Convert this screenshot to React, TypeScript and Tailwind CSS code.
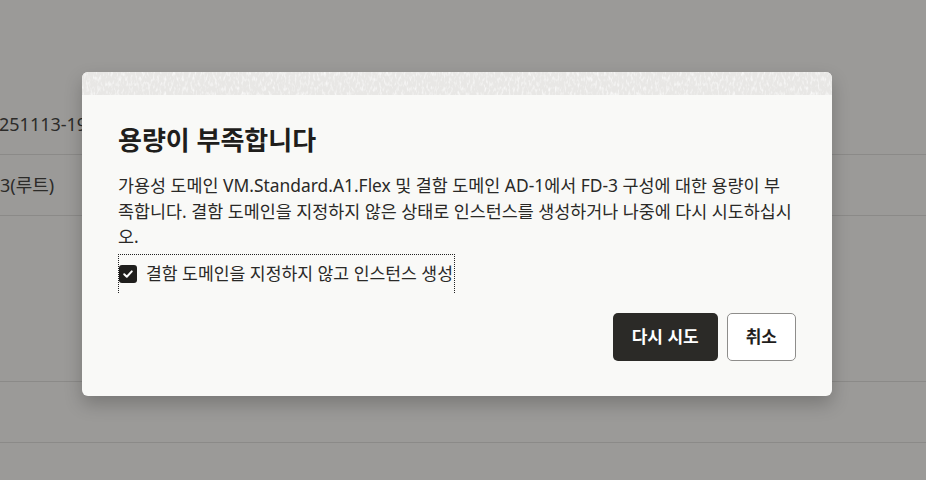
import React from "react";

const font = { fontFamily: '"Noto Sans", "Noto Sans CJK KR", sans-serif' };

function Noise() {
  return (
    <svg className="absolute inset-0 h-full w-full" preserveAspectRatio="none">
      <filter id="nz" x="0" y="0" width="100%" height="100%">
        <feTurbulence type="fractalNoise" baseFrequency="0.45 0.2" numOctaves="2" seed="7" />
        <feColorMatrix
          type="matrix"
          values="0 0 0 0 1  0 0 0 0 1  0 0 0 0 1  0 0 0 1.8 -0.85"
        />
      </filter>
      <rect width="100%" height="100%" fill="#e8e7e5" />
      <rect width="100%" height="100%" filter="url(#nz)" />
    </svg>
  );
}

export default function App() {
  return (
    <div className="relative h-[480px] w-[926px] overflow-hidden bg-[#9b9a98]" style={font}>
      {/* background page (dimmed) */}
      <div className="flex flex-col pt-[94px] text-[18px] text-[#2c2b29]">
        <div className="flex h-[61px] items-center border-b border-[#8b8a88] whitespace-nowrap">
          <span className="-ml-[1px]">251113-1930</span>
        </div>
        <div className="flex h-[61px] items-center border-b border-[#8b8a88]">
          <span>3(루트)</span>
        </div>
        <div className="h-[166px] border-b border-[#8b8a88]" />
        <div className="h-[61px] border-b border-[#8b8a88]" />
      </div>

      {/* dialog */}
      <div className="absolute left-[82px] top-[72px] flex w-[750px] flex-col overflow-hidden rounded-[6px] bg-[#f9f9f7] shadow-[0_8px_18px_rgba(0,0,0,0.22)]">
        <div className="relative h-[23px] w-full">
          <Noise />
        </div>
        <div className="flex flex-col px-[36px] pb-[35px] pt-[29px] text-[#1f1e1c]">
          <h1 className="text-[26px] font-bold leading-[32px]">용량이 부족합니다</h1>
          <p className="mt-[17px] text-[17.4px] leading-[25.6px] text-[#2a2927]">
            가용성 도메인 VM.Standard.A1.Flex 및 결함 도메인 AD-1에서 FD-3 구성에 대한 용량이 부족합니다. 결함 도메인을 지정하지 않은 상태로 인스턴스를 생성하거나 나중에 다시 시도하십시오.
          </p>
          <div className="mt-[4px] flex">
            <label className="flex h-[39px] items-center gap-[9px] border-x border-t border-dotted border-[#222] pr-[1px] text-[17.2px] text-[#2a2927]">
              <span className="flex h-[18px] w-[18px] items-center justify-center rounded-[3px] bg-[#1f1e1c]">
                <svg width="12" height="12" viewBox="0 0 12 12">
                  <path d="M2.2 6.3 L4.8 8.8 L9.8 3.4" fill="none" stroke="#fff" strokeWidth="2" strokeLinecap="round" strokeLinejoin="round" />
                </svg>
              </span>
              <span>결함 도메인을 지정하지 않고 인스턴스 생성</span>
            </label>
          </div>
          <div className="mt-[20px] flex justify-end gap-[9px]">
            <button className="h-[48px] rounded-[5px] bg-[#2b2a27] px-[19px] text-[17px] font-bold text-white">
              다시 시도
            </button>
            <button className="h-[48px] rounded-[5px] border border-[#8e8d8b] bg-white px-[18px] text-[17px] font-bold text-[#1f1e1c]">
              취소
            </button>
          </div>
        </div>
      </div>
    </div>
  );
}
